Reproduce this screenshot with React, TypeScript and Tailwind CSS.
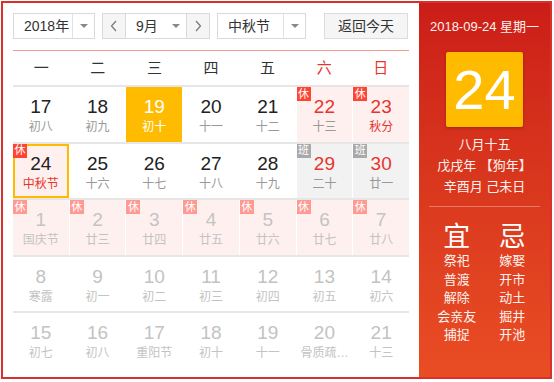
import React from 'react';

type Day = {
  n: number;
  lunar: string;
  kind?: 'cur' | 'weekend' | 'next';
  badge?: '休' | '班';
  bg?: 'pink' | 'grey';
  redLunar?: boolean;
  selected?: boolean;
  today?: boolean;
};

const weeks: Day[][] = [
  [
    { n: 17, lunar: '初八' },
    { n: 18, lunar: '初九' },
    { n: 19, lunar: '初十', selected: true },
    { n: 20, lunar: '十一' },
    { n: 21, lunar: '十二' },
    { n: 22, lunar: '十三', kind: 'weekend', badge: '休', bg: 'pink' },
    { n: 23, lunar: '秋分', kind: 'weekend', badge: '休', bg: 'pink', redLunar: true },
  ],
  [
    { n: 24, lunar: '中秋节', badge: '休', bg: 'pink', redLunar: true, today: true },
    { n: 25, lunar: '十六' },
    { n: 26, lunar: '十七' },
    { n: 27, lunar: '十八' },
    { n: 28, lunar: '十九' },
    { n: 29, lunar: '二十', kind: 'weekend', badge: '班', bg: 'grey' },
    { n: 30, lunar: '廿一', kind: 'weekend', badge: '班', bg: 'grey' },
  ],
  [
    { n: 1, lunar: '国庆节', kind: 'next', badge: '休', bg: 'pink' },
    { n: 2, lunar: '廿三', kind: 'next', badge: '休', bg: 'pink' },
    { n: 3, lunar: '廿四', kind: 'next', badge: '休', bg: 'pink' },
    { n: 4, lunar: '廿五', kind: 'next', badge: '休', bg: 'pink' },
    { n: 5, lunar: '廿六', kind: 'next', badge: '休', bg: 'pink' },
    { n: 6, lunar: '廿七', kind: 'next', badge: '休', bg: 'pink' },
    { n: 7, lunar: '廿八', kind: 'next', badge: '休', bg: 'pink' },
  ],
  [
    { n: 8, lunar: '寒露', kind: 'next' },
    { n: 9, lunar: '初一', kind: 'next' },
    { n: 10, lunar: '初二', kind: 'next' },
    { n: 11, lunar: '初三', kind: 'next' },
    { n: 12, lunar: '初四', kind: 'next' },
    { n: 13, lunar: '初五', kind: 'next' },
    { n: 14, lunar: '初六', kind: 'next' },
  ],
  [
    { n: 15, lunar: '初七', kind: 'next' },
    { n: 16, lunar: '初八', kind: 'next' },
    { n: 17, lunar: '重阳节', kind: 'next' },
    { n: 18, lunar: '初十', kind: 'next' },
    { n: 19, lunar: '十一', kind: 'next' },
    { n: 20, lunar: '骨质疏…', kind: 'next' },
    { n: 21, lunar: '十三', kind: 'next' },
  ],
];

const Caret = () => (
  <span className="w-0 h-0 border-l-[4px] border-r-[4px] border-t-[4px] border-l-transparent border-r-transparent border-t-[#888]" />
);

const Select = ({ label, width }: { label: string; width: string }) => (
  <div className={`${width} h-[26px] flex items-center border border-[#d9d9d9] bg-white`}>
    <span className="flex-1 pl-[10px] text-[14px] text-[#333]">{label}</span>
    <span className="w-[22px] h-full flex items-center justify-center border-l border-[#e2e2e2]">
      <Caret />
    </span>
  </div>
);

const Chevron = ({ dir }: { dir: 'l' | 'r' }) => (
  <svg width="8" height="12" viewBox="0 0 8 12">
    <path d={dir === 'l' ? 'M6 1 L1.5 6 L6 11' : 'M2 1 L6.5 6 L2 11'} fill="none" stroke="#777" strokeWidth="1.2" />
  </svg>
);

const Cell = ({ d }: { d: Day }) => {
  let bg = 'bg-white';
  if (d.selected) bg = 'bg-[#ffbb00]';
  else if (d.bg === 'pink') bg = 'bg-[#fff0f0]';
  else if (d.bg === 'grey') bg = 'bg-[#f2f2f2]';

  let num = 'text-[#222]';
  let lunar = 'text-[#999]';
  if (d.selected) {
    num = 'text-white';
    lunar = 'text-white';
  } else if (d.kind === 'weekend') {
    num = 'text-[#e8352b]';
  } else if (d.kind === 'next') {
    num = 'text-[#c3c3c3]';
    lunar = 'text-[#c3c3c3]';
  }
  if (d.redLunar) lunar = 'text-[#e8352b]';

  const faded = d.kind === 'next';
  const badgeBg = d.badge === '班' ? 'bg-[#a9a9a9]' : faded ? 'bg-[#ff9a92]' : 'bg-[#ff4433]';

  return (
    <div
      className={`relative h-[54.5px] flex flex-col items-center ${bg} ${
        d.today ? 'shadow-[inset_0_0_0_2px_#ffbb00]' : ''
      }`}
    >
      {d.badge && (
        <span
          className={`absolute left-0 top-0 w-[14px] h-[14px] flex items-center justify-center text-[11px] leading-none text-white ${badgeBg}`}
        >
          {d.badge}
        </span>
      )}
      <span className={`pt-[9px] text-[19px] leading-[22px] ${num}`}>{d.n}</span>
      <span className={`mt-px text-[12px] leading-[16px] whitespace-nowrap ${lunar}`}>{d.lunar}</span>
    </div>
  );
};

const yi = ['祭祀', '普渡', '解除', '会亲友', '捕捉'];
const ji = ['嫁娶', '开市', '动土', '掘井', '开池'];

export default function App() {
  return (
    <div
      className="w-[554px] h-[382px] bg-white p-px"
      style={{ fontFamily: '"Liberation Sans", "Noto Sans CJK SC", sans-serif' }}
    >
      <div className="w-[551px] h-[378px] flex border-2 border-[#d8302b]">
        <div className="w-[416px] px-[10px] pt-[10px]">
          <div className="flex items-center">
            <Select label="2018年" width="w-[82px]" />
            <div className="ml-[7px] w-[108px] h-[26px] flex border border-[#d9d9d9]">
              <span className="w-[23px] flex items-center justify-center bg-[#f5f5f5] border-r border-[#d9d9d9]">
                <Chevron dir="l" />
              </span>
              <span className="flex-1 flex items-center bg-white">
                <span className="flex-1 pl-[10px] text-[14px] text-[#333]">9月</span>
                <span className="w-[20px] flex justify-center">
                  <Caret />
                </span>
              </span>
              <span className="w-[23px] flex items-center justify-center bg-[#f5f5f5] border-l border-[#d9d9d9]">
                <Chevron dir="r" />
              </span>
            </div>
            <div className="ml-[7px]">
              <Select label="中秋节" width="w-[89px]" />
            </div>
            <button className="ml-[18px] w-[84px] h-[26px] bg-[#f5f5f5] border border-[#dcdcdc] text-[14px] text-[#333]">
              返回今天
            </button>
          </div>
          <div className="mt-[11px] h-px bg-[#f39b90]" />
          <div className="grid grid-cols-7 h-[34px] items-center text-[15px] text-[#333] text-center">
            {['一', '二', '三', '四', '五'].map((w) => (
              <span key={w}>{w}</span>
            ))}
            <span className="text-[#e8352b]">六</span>
            <span className="text-[#e8352b]">日</span>
          </div>
          {weeks.map((row, i) => (
            <div key={i} className={`grid grid-cols-7 gap-px ${i < 4 || true ? 'border-t-2 border-[#e6e6e6]' : ''}`}>
              {row.map((d) => (
                <Cell key={`${i}-${d.n}`} d={d} />
              ))}
            </div>
          ))}
        </div>
        <div className="flex-1 flex flex-col items-center bg-gradient-to-b from-[#cb1d18] to-[#e94d24] text-[#fff2ee]">
          <div className="pt-[13px] text-[13px] leading-[22px] whitespace-nowrap">2018-09-24 星期一</div>
          <div className="mt-[14px] w-[77px] h-[75px] rounded-[2px] bg-[#ffbb00] shadow-[0_1px_3px_rgba(0,0,0,0.25)] flex items-center justify-center text-white text-[56px] leading-none">
            24
          </div>
          <div className="mt-[7px] text-[13px] leading-[21px] text-center">
            <div>八月十五</div>
            <div>戊戌年 【狗年】</div>
            <div>辛酉月 己未日</div>
          </div>
          <div className="mt-[9px] self-stretch mx-[10px] h-px bg-[#ffffff55]" />
          <div className="self-stretch mx-[10px] grid grid-cols-2 text-center">
            <div className="flex flex-col">
              <span className="mt-[15px] text-[27px] leading-[30px] text-white">宜</span>
              {yi.map((t) => (
                <span key={t} className="text-[13px] leading-[18.5px]">
                  {t}
                </span>
              ))}
            </div>
            <div className="flex flex-col">
              <span className="mt-[15px] text-[27px] leading-[30px] text-white">忌</span>
              {ji.map((t) => (
                <span key={t} className="text-[13px] leading-[18.5px]">
                  {t}
                </span>
              ))}
            </div>
          </div>
        </div>
      </div>
    </div>
  );
}
